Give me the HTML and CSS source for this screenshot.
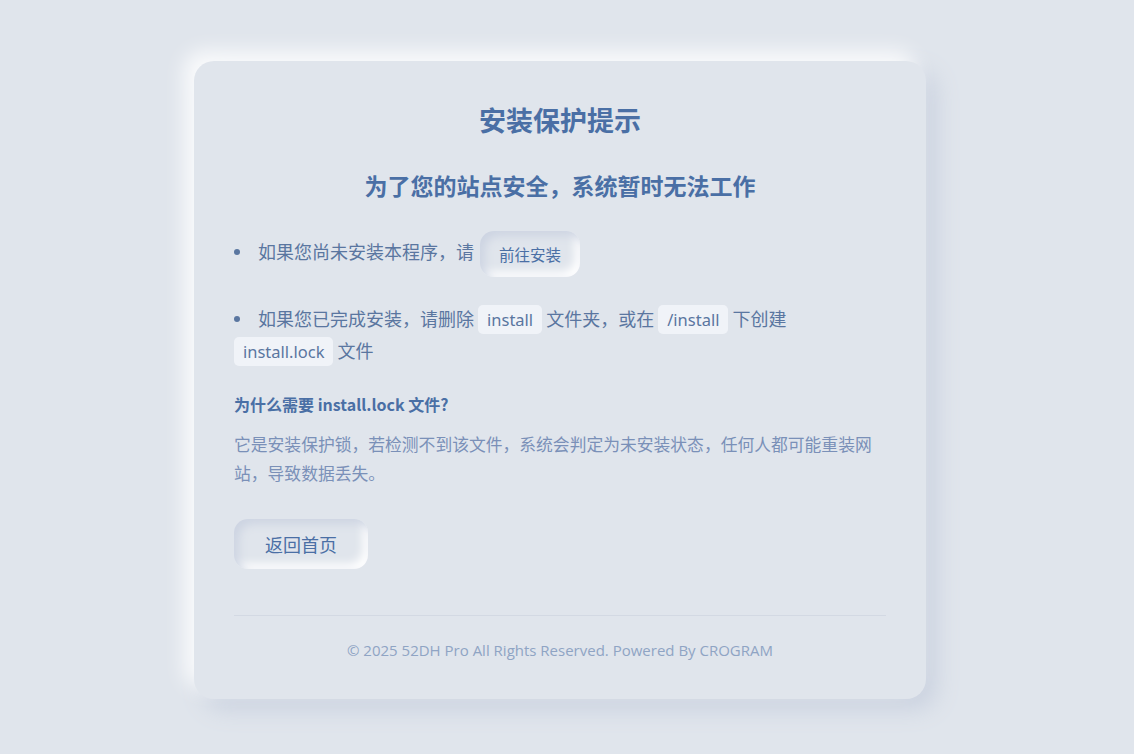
FILE: index.html
```html
<!DOCTYPE html>
<html lang="zh-CN">
<head>
<meta charset="utf-8">
<title>安装保护提示</title>
<link rel="stylesheet" href="styles.css">
</head>
<body>
<div class="page">
  <div class="card">
    <h1 class="title">安装保护提示</h1>
    <h2 class="subtitle">为了您的站点安全，系统暂时无法工作</h2>
    <ul class="steps">
      <li class="step">如果您尚未安装本程序，请 <a class="btn btn-small" href="#">前往安装</a></li>
      <li class="step">如果您已完成安装，请删除 <code class="pill">install</code> 文件夹，或在 <code class="pill">/install</code> 下创建 <code class="pill">install.lock</code> 文件</li>
    </ul>
    <h3 class="why">为什么需要 install.lock 文件?</h3>
    <p class="desc">它是安装保护锁，若检测不到该文件，系统会判定为未安装状态，任何人都可能重装网站，导致数据丢失。</p>
    <div class="actions">
      <a class="btn btn-large" href="#">返回首页</a>
    </div>
    <div class="footer">© 2025 52DH Pro All Rights Reserved. Powered By CROGRAM</div>
  </div>
</div>
</body>
</html>
```
FILE: styles.css
```css
* { box-sizing: border-box; }
html, body { margin: 0; padding: 0; }
body {
  background: #e0e5ec;
  font-family: "Noto Sans CJK SC", "Noto Sans", sans-serif;
  color: #5a76a0;
  min-height: 754px;
}
.page {
  display: flex;
  justify-content: center;
  padding: 61px 14px 0 0;
}
.card {
  width: 732px;
  background: #e0e5ec;
  border-radius: 20px;
  padding: 40px 40px 38px;
  box-shadow: -10px -10px 20px rgba(255,255,255,0.85), 10px 10px 24px #c9d1df;
}
.title {
  margin: 0;
  text-align: center;
  font-size: 27px;
  line-height: 38px;
  font-weight: 700;
  color: #4a6fa5;
}
.subtitle {
  margin: 30px 0 0;
  text-align: center;
  font-size: 23px;
  line-height: 32px;
  font-weight: 700;
  color: #4a6fa5;
}
.steps {
  list-style: none;
  margin: 30px 0 0;
  padding: 0;
}
.step {
  font-size: 18px;
  line-height: 31px;
  color: #5a76a0;
}
.step + .step { margin-top: 26px; }
.step::before {
  content: "";
  display: inline-block;
  width: 6px;
  height: 6px;
  border-radius: 50%;
  background: #5a76a0;
  margin: 0 18px 0 0;
  vertical-align: middle;
  position: relative;
  top: -2px;
}
.pill {
  font-family: "Noto Sans", "Noto Sans CJK SC", sans-serif;
  font-size: 16.5px;
  background: #f0f3f8;
  color: #5a76a0;
  border-radius: 5px;
  padding: 3px 9px;
}
.btn {
  display: inline-block;
  text-decoration: none;
  color: #4a6fa5;
  background: #e0e5ec;
  box-shadow: inset 5px 5px 10px #cdd4e2, inset -5px -5px 10px #ffffff;
}
.btn-small {
  font-size: 15.5px;
  line-height: 24px;
  padding: 11px 19px;
  border-radius: 14px;
  margin-left: 2px;
  vertical-align: middle;
}
.why {
  margin: 25px 0 0;
  font-size: 16px;
  line-height: 24px;
  font-weight: 700;
  color: #4a6fa5;
}
.desc {
  margin: 14px 0 0;
  font-size: 16.8px;
  line-height: 29px;
  color: #7a90b8;
}
.actions {
  margin-top: 31px;
  padding-bottom: 46px;
  border-bottom: 1px solid #d3d9e3;
}
.btn-large {
  font-size: 18px;
  line-height: 26px;
  padding: 12px 31px;
  border-radius: 14px;
}
.footer {
  padding-top: 23px;
  text-align: center;
  font-family: "Open Sans", "Noto Sans", sans-serif;
  font-size: 15px;
  line-height: 22px;
  color: #8fa4c4;
}
```
